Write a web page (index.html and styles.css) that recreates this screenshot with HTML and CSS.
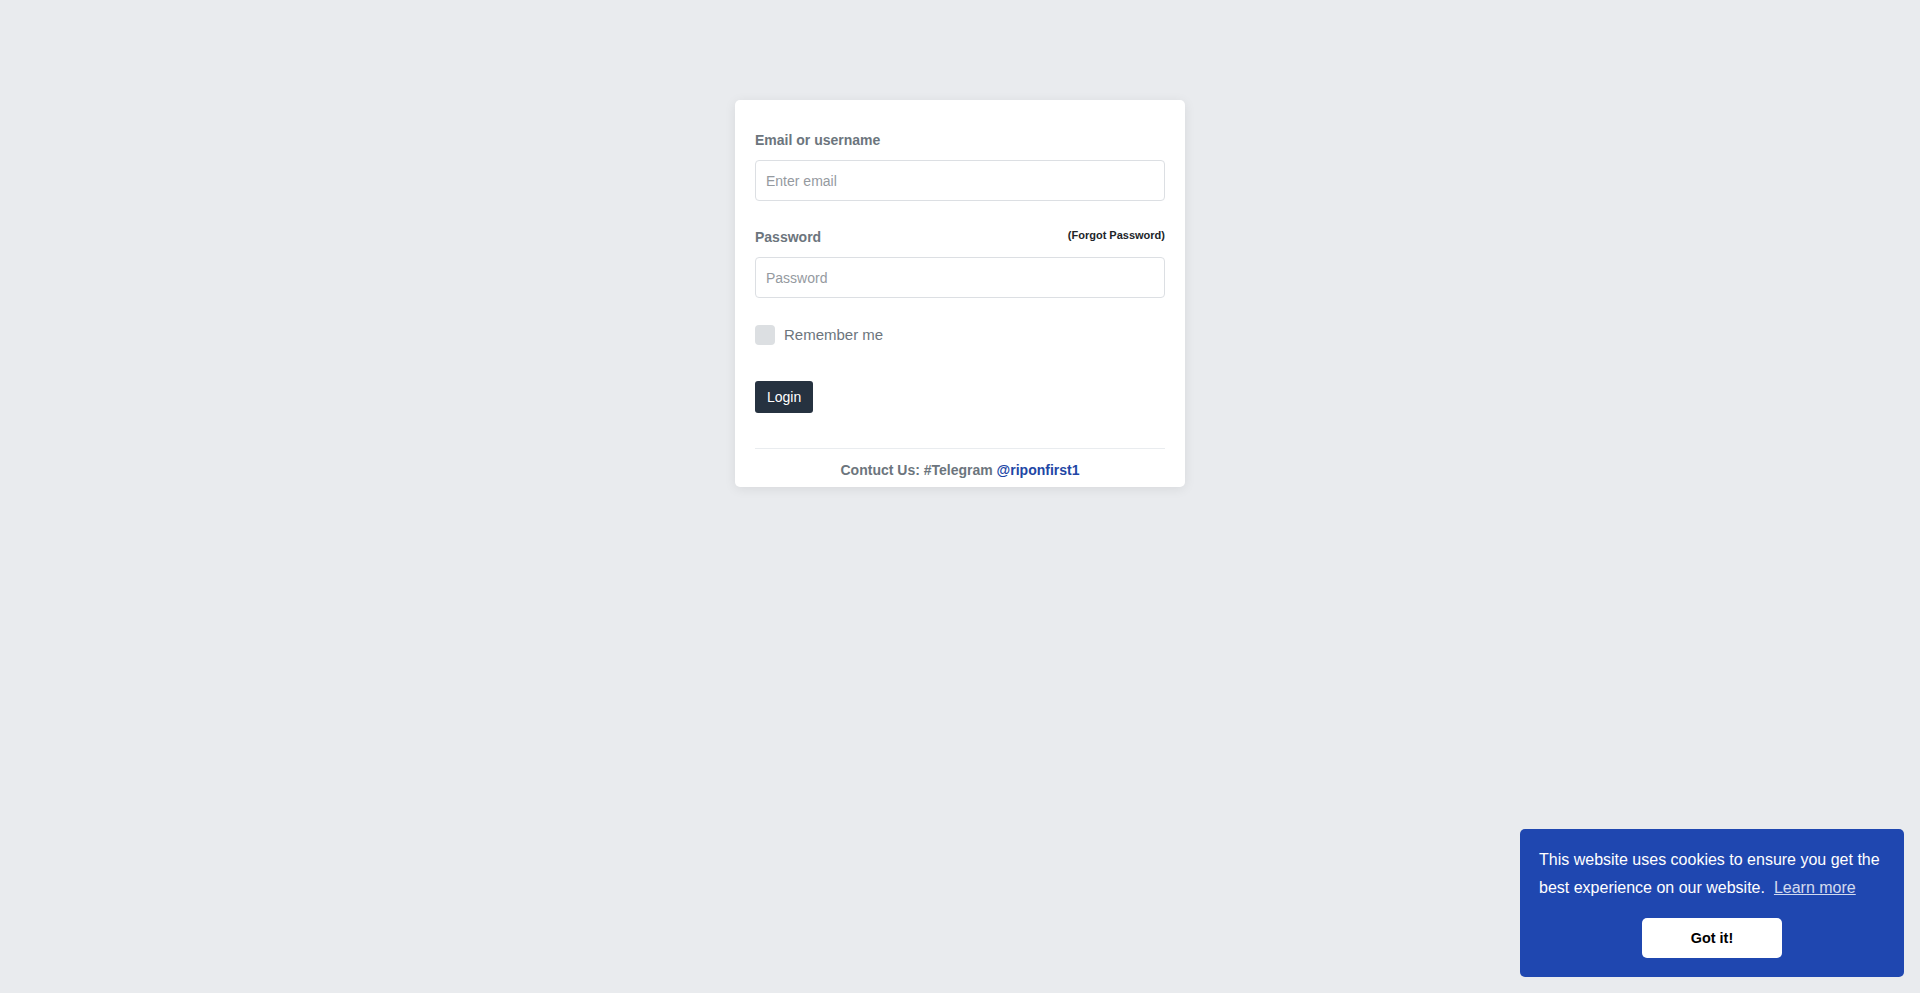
FILE: index.html
```html
<!DOCTYPE html>
<html lang="en">
<head>
<meta charset="utf-8">
<title>Login</title>
<link rel="stylesheet" href="styles.css">
</head>
<body>
<main class="page">
  <form class="card">
    <div class="group">
      <div class="label-row">
        <label class="label" for="email">Email or username</label>
      </div>
      <input class="input" id="email" type="text" placeholder="Enter email">
    </div>
    <div class="group group-last">
      <div class="label-row">
        <label class="label" for="password">Password</label>
        <a class="forgot" href="#">(Forgot Password)</a>
      </div>
      <input class="input" id="password" type="password" placeholder="Password">
    </div>
    <div class="check-row">
      <span class="checkbox"></span>
      <span class="check-label">Remember me</span>
    </div>
    <div class="actions">
      <button class="btn-login" type="button">Login</button>
    </div>
    <div class="contact">Contuct Us: #Telegram <a class="contact-link" href="#">@riponfirst1</a></div>
  </form>
</main>
<div class="cookie">
  <p class="cookie-msg">This website uses cookies to ensure you get the best experience on our website.<a class="cookie-link" href="#">Learn more</a></p>
  <div class="cookie-actions">
    <button class="cookie-btn" type="button">Got it!</button>
  </div>
</div>
</body>
</html>
```

FILE: styles.css
```css
* { box-sizing: border-box; }
html, body {
  margin: 0;
  padding: 0;
  height: 100%;
}
body {
  background: #e9ebee;
  font-family: "Liberation Sans", Arial, sans-serif;
  color: #212529;
}
.page {
  display: flex;
  justify-content: center;
  padding-top: 100px;
}
.card {
  width: 450px;
  background: #fff;
  border-radius: 5px;
  box-shadow: 0 2px 12px rgba(0, 0, 0, 0.08);
  padding: 30px 20px 7px;
  margin: 0;
}
.group {
  margin-bottom: 26px;
}
.group-last {
  margin-bottom: 24px;
}
.label-row {
  display: flex;
  justify-content: space-between;
  align-items: flex-start;
  margin-bottom: 9px;
}
.label {
  font-size: 14px;
  font-weight: 700;
  line-height: 21px;
  color: #6c757d;
}
.forgot {
  font-size: 11px;
  font-weight: 700;
  line-height: 17px;
  color: #212529;
  text-decoration: none;
}
.input {
  display: block;
  width: 100%;
  height: 41px;
  padding: 0 10px;
  border: 1px solid #dcdfe3;
  border-radius: 4px;
  font-family: "Liberation Sans", Arial, sans-serif;
  font-size: 14px;
  color: #495057;
  background: #fff;
  outline: none;
}
.input::placeholder {
  color: #959a9f;
}
.check-row {
  display: flex;
  align-items: center;
  height: 25px;
}
.checkbox {
  width: 20px;
  height: 20px;
  border-radius: 4px;
  background: #dcdfe2;
  margin-right: 9px;
}
.check-label {
  font-size: 15px;
  color: #6c757d;
  line-height: 25px;
}
.actions {
  margin-top: 34px;
  margin-bottom: 35px;
}
.btn-login {
  height: 32px;
  padding: 0 12px;
  background: #263240;
  color: #fff;
  border: 0;
  border-radius: 3px;
  font-family: "Liberation Sans", Arial, sans-serif;
  font-size: 14px;
  line-height: 32px;
}
.contact {
  border-top: 1px solid #e9ecef;
  padding-top: 11px;
  text-align: center;
  font-size: 14px;
  font-weight: 700;
  line-height: 20px;
  color: #6c757d;
}
.contact-link {
  color: #2146a5;
  text-decoration: none;
}
.cookie {
  position: fixed;
  right: 16px;
  bottom: 16px;
  width: 384px;
  background: #1f47b0;
  color: #fff;
  border-radius: 5px;
  padding: 17px 19px 19px;
  font-family: "Liberation Sans", Arial, sans-serif;
  font-size: 16px;
}
.cookie-msg {
  margin: 0 0 17px;
  line-height: 27.4px;
}
.cookie-link {
  color: #fff;
  opacity: 0.8;
  text-decoration: underline;
  margin-left: 9px;
}
.cookie-actions {
  display: flex;
  justify-content: center;
}
.cookie-btn {
  width: 140px;
  height: 40px;
  background: #fff;
  color: #000;
  border: 0;
  border-radius: 5px;
  font-family: "Liberation Sans", Arial, sans-serif;
  font-size: 14.4px;
  font-weight: 700;
}
```
